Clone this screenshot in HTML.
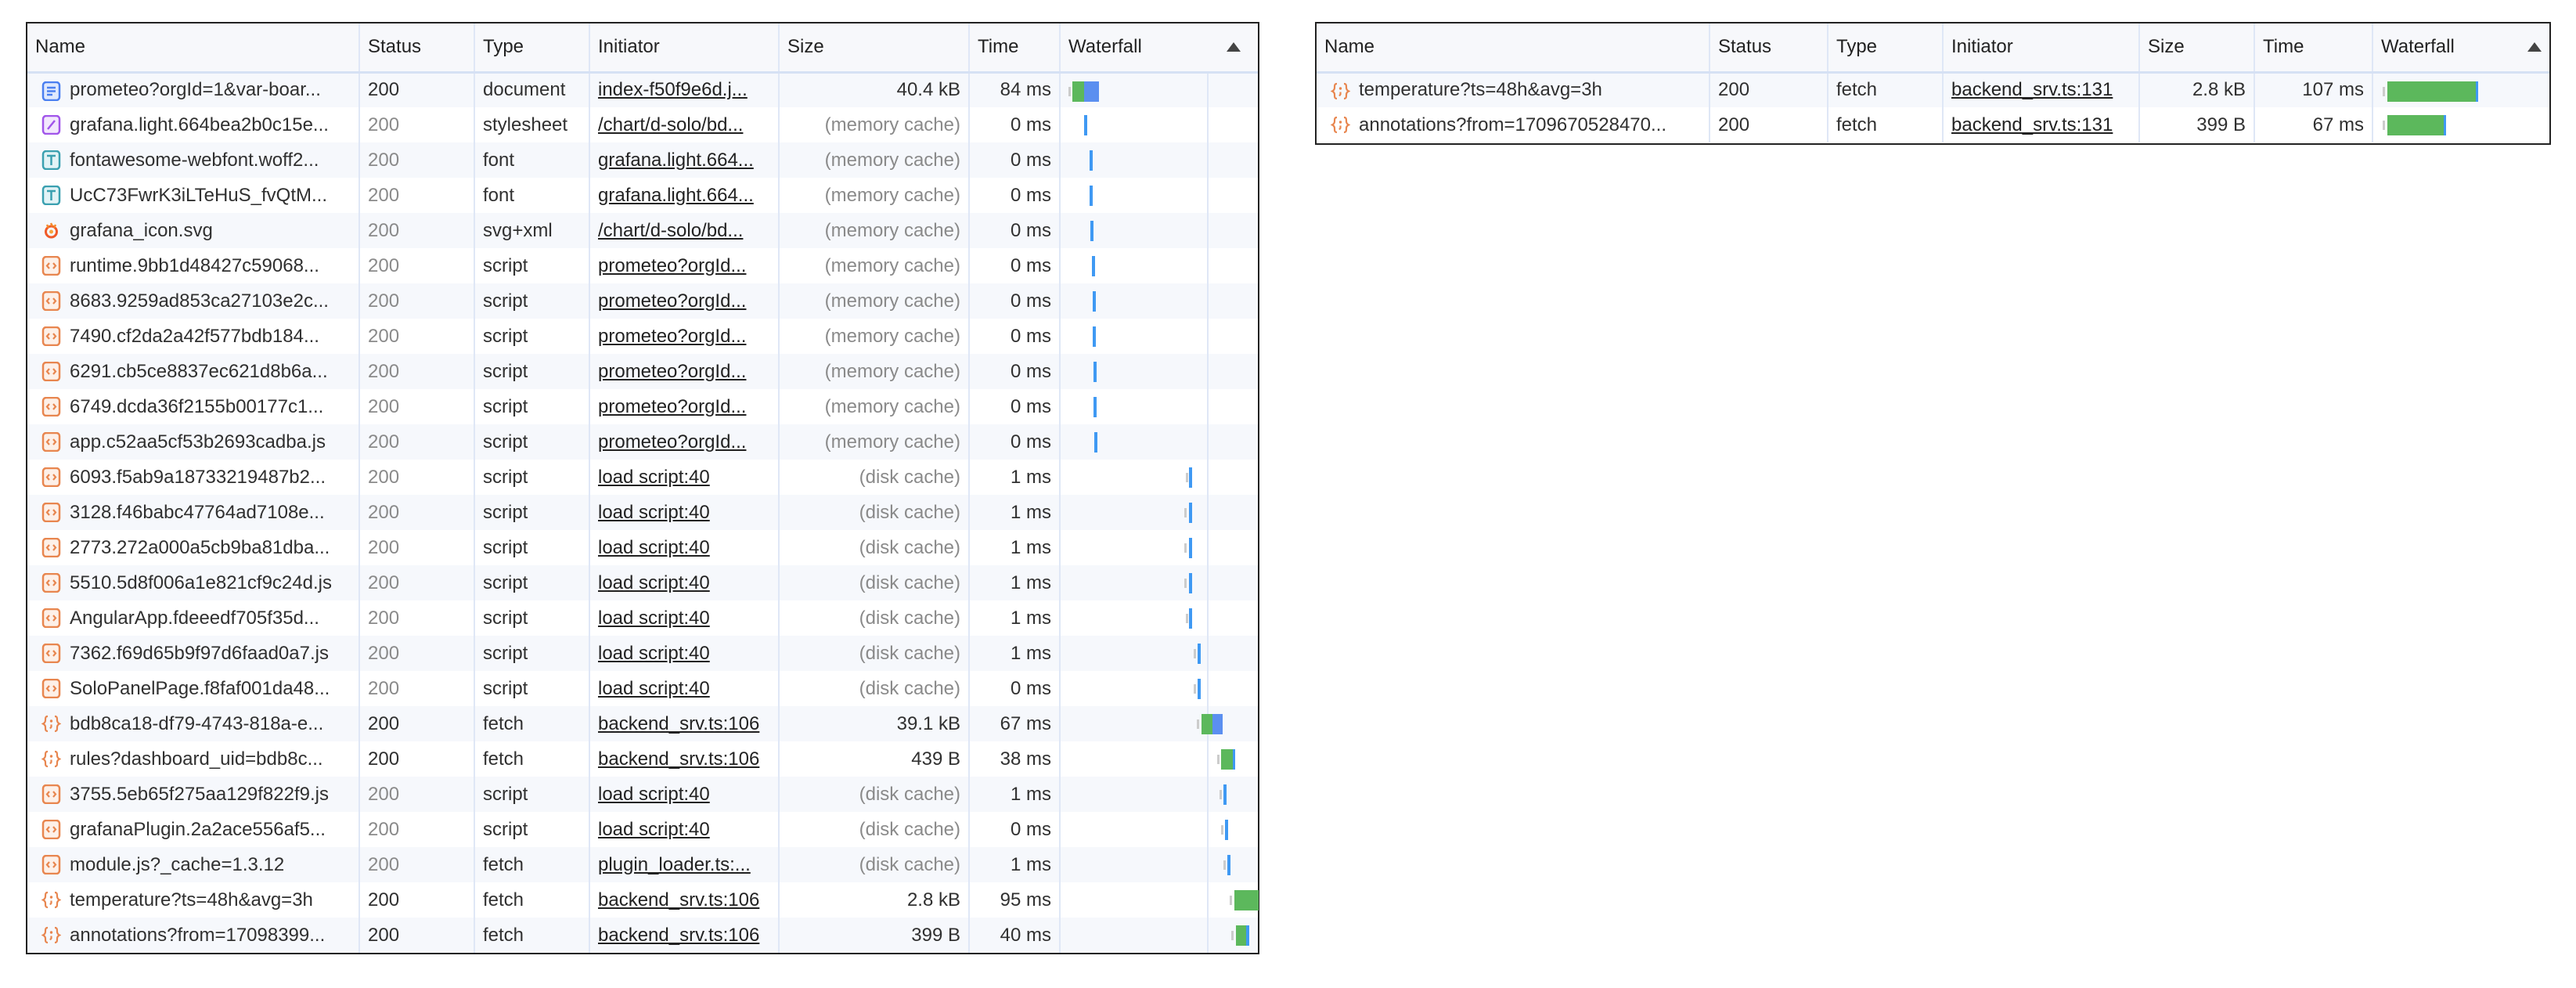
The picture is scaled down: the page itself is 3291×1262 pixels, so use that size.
<!DOCTYPE html>
<html><head><meta charset="utf-8"><style>
*{box-sizing:border-box;margin:0;padding:0}
body{width:3291px;height:1262px;background:#fff;position:relative;overflow:hidden;font-family:"Liberation Sans",Arial,sans-serif;font-size:24px;color:#303030}
.box{position:absolute;border:2px solid #222;background:#fff}
table{border-collapse:collapse;table-layout:fixed}
td,th{height:45px;padding:0 10px;white-space:nowrap;overflow:hidden;text-overflow:ellipsis;border-right:2px solid #dfe7f6;font-weight:normal;text-align:left;position:relative}
td:last-child,th:last-child{border-right:none}
th{height:62px;background:#f7f8fb;border-bottom:3px solid #d6e1f4;color:#222}
tr:nth-child(even) td{background:#f6f8fc}
tr:nth-child(odd) td{background:#fff}
.n{padding-left:54px}
.ic{position:absolute;left:18px;top:10px;width:25px;height:25px}
.g{color:#8a8a8a}
.r{text-align:right}
u{text-decoration:underline;color:#222}
.wf{padding:0;overflow:visible}
.b{position:absolute;top:10px;height:26px}
.gr{background:#ccc;width:3px;height:12px;top:17px}
.grn{background:#5cb85c}
.bl{background:#3f99f3}
.blu{background:#5b8ff0}
.inner{position:absolute;left:187px;top:0;bottom:0;border-left:2px solid #dfe7f6}
.arr{position:absolute;right:22px;top:24px;width:0;height:0;border-left:9px solid transparent;border-right:9px solid transparent;border-bottom:12px solid #444}
</style></head><body>

<svg width="0" height="0" style="position:absolute"><defs>
<g id="doc"><rect x="2" y="1" width="21" height="23" rx="4" fill="#dfe9fd" stroke="#4a7ff0" stroke-width="2.5"/><path d="M7 8h11M7 12.5h11M7 17h7" stroke="#4a7ff0" stroke-width="2.5"/></g>
<g id="css"><rect x="2" y="1" width="21" height="23" rx="4" fill="#f3e8fd" stroke="#a155ea" stroke-width="2.5"/><path d="M8 18l9-11" stroke="#a155ea" stroke-width="2.5"/></g>
<g id="font"><rect x="2" y="1" width="21" height="23" rx="4" fill="#e2f3f6" stroke="#3aa0b0" stroke-width="2.5"/><path d="M7 7h11M12.5 7v12" stroke="#3aa0b0" stroke-width="2.5"/></g>
<g id="graf"><circle cx="12.5" cy="14" r="7" fill="none" stroke="#f05a28" stroke-width="3"/><circle cx="12.5" cy="14" r="2.5" fill="#f8a33a"/><path d="M12 3l2 4M18 5l-2 4M7 5l2 4" stroke="#f58a2a" stroke-width="2.5"/></g>
<g id="js"><rect x="2" y="1" width="21" height="23" rx="4" fill="#fdf0e8" stroke="#e8864f" stroke-width="2.5"/><path d="M10 9l-3 3.5 3 3.5M15 9l3 3.5-3 3.5" fill="none" stroke="#e8864f" stroke-width="2.2"/></g>
<g id="fx"><path d="M8 3c-3 0-3 2-3 5s-2 4-3 4.5c1 .5 3 1.5 3 4.5s0 5 3 5M17 3c3 0 3 2 3 5s2 4 3 4.5c-1 .5-3 1.5-3 4.5s0 5-3 5" fill="none" stroke="#e8864f" stroke-width="2.2"/><circle cx="12.5" cy="9" r="1.7" fill="#e8864f"/><path d="M12.5 13.5v3l-1.5 2" stroke="#e8864f" stroke-width="2.2" fill="none"/></g>
</defs></svg>

<div class="box" style="left:33px;top:28px;width:1576px;height:1191px">
<table style="width:1572px">
<colgroup><col style="width:424px"><col style="width:147px"><col style="width:147px"><col style="width:242px"><col style="width:243px"><col style="width:116px"><col style="width:253px"></colgroup>
<tr><th>Name</th><th>Status</th><th>Type</th><th>Initiator</th><th>Size</th><th>Time</th><th>Waterfall<span class="arr"></span></th></tr>
<tr><td class="n"><svg class="ic"><use href="#doc"/></svg>prometeo?orgId=1&amp;var-boar...</td><td>200</td><td>document</td><td><u>index-f50f9e6d.j...</u></td><td class="r">40.4 kB</td><td class="r">84 ms</td><td class="wf"><div class="inner"></div><div class="b gr" style="left:10px"></div><div class="b grn" style="left:15px;width:15px"></div><div class="b blu" style="left:30px;width:19px"></div></td></tr>
<tr><td class="n"><svg class="ic"><use href="#css"/></svg>grafana.light.664bea2b0c15e...</td><td class="g">200</td><td>stylesheet</td><td><u>/chart/d-solo/bd...</u></td><td class="r g">(memory cache)</td><td class="r">0 ms</td><td class="wf"><div class="inner"></div><div class="b bl" style="left:30px;width:4px"></div></td></tr>
<tr><td class="n"><svg class="ic"><use href="#font"/></svg>fontawesome-webfont.woff2...</td><td class="g">200</td><td>font</td><td><u>grafana.light.664...</u></td><td class="r g">(memory cache)</td><td class="r">0 ms</td><td class="wf"><div class="inner"></div><div class="b bl" style="left:37px;width:4px"></div></td></tr>
<tr><td class="n"><svg class="ic"><use href="#font"/></svg>UcC73FwrK3iLTeHuS_fvQtM...</td><td class="g">200</td><td>font</td><td><u>grafana.light.664...</u></td><td class="r g">(memory cache)</td><td class="r">0 ms</td><td class="wf"><div class="inner"></div><div class="b bl" style="left:37px;width:4px"></div></td></tr>
<tr><td class="n"><svg class="ic"><use href="#graf"/></svg>grafana_icon.svg</td><td class="g">200</td><td>svg+xml</td><td><u>/chart/d-solo/bd...</u></td><td class="r g">(memory cache)</td><td class="r">0 ms</td><td class="wf"><div class="inner"></div><div class="b bl" style="left:38px;width:4px"></div></td></tr>
<tr><td class="n"><svg class="ic"><use href="#js"/></svg>runtime.9bb1d48427c59068...</td><td class="g">200</td><td>script</td><td><u>prometeo?orgId...</u></td><td class="r g">(memory cache)</td><td class="r">0 ms</td><td class="wf"><div class="inner"></div><div class="b bl" style="left:40px;width:4px"></div></td></tr>
<tr><td class="n"><svg class="ic"><use href="#js"/></svg>8683.9259ad853ca27103e2c...</td><td class="g">200</td><td>script</td><td><u>prometeo?orgId...</u></td><td class="r g">(memory cache)</td><td class="r">0 ms</td><td class="wf"><div class="inner"></div><div class="b bl" style="left:41px;width:4px"></div></td></tr>
<tr><td class="n"><svg class="ic"><use href="#js"/></svg>7490.cf2da2a42f577bdb184...</td><td class="g">200</td><td>script</td><td><u>prometeo?orgId...</u></td><td class="r g">(memory cache)</td><td class="r">0 ms</td><td class="wf"><div class="inner"></div><div class="b bl" style="left:41px;width:4px"></div></td></tr>
<tr><td class="n"><svg class="ic"><use href="#js"/></svg>6291.cb5ce8837ec621d8b6a...</td><td class="g">200</td><td>script</td><td><u>prometeo?orgId...</u></td><td class="r g">(memory cache)</td><td class="r">0 ms</td><td class="wf"><div class="inner"></div><div class="b bl" style="left:42px;width:4px"></div></td></tr>
<tr><td class="n"><svg class="ic"><use href="#js"/></svg>6749.dcda36f2155b00177c1...</td><td class="g">200</td><td>script</td><td><u>prometeo?orgId...</u></td><td class="r g">(memory cache)</td><td class="r">0 ms</td><td class="wf"><div class="inner"></div><div class="b bl" style="left:42px;width:4px"></div></td></tr>
<tr><td class="n"><svg class="ic"><use href="#js"/></svg>app.c52aa5cf53b2693cadba.js</td><td class="g">200</td><td>script</td><td><u>prometeo?orgId...</u></td><td class="r g">(memory cache)</td><td class="r">0 ms</td><td class="wf"><div class="inner"></div><div class="b bl" style="left:43px;width:4px"></div></td></tr>
<tr><td class="n"><svg class="ic"><use href="#js"/></svg>6093.f5ab9a18733219487b2...</td><td class="g">200</td><td>script</td><td><u>load script:40</u></td><td class="r g">(disk cache)</td><td class="r">1 ms</td><td class="wf"><div class="inner"></div><div class="b gr" style="left:160px"></div><div class="b bl" style="left:164px;width:4px"></div></td></tr>
<tr><td class="n"><svg class="ic"><use href="#js"/></svg>3128.f46babc47764ad7108e...</td><td class="g">200</td><td>script</td><td><u>load script:40</u></td><td class="r g">(disk cache)</td><td class="r">1 ms</td><td class="wf"><div class="inner"></div><div class="b gr" style="left:158px"></div><div class="b bl" style="left:164px;width:4px"></div></td></tr>
<tr><td class="n"><svg class="ic"><use href="#js"/></svg>2773.272a000a5cb9ba81dba...</td><td class="g">200</td><td>script</td><td><u>load script:40</u></td><td class="r g">(disk cache)</td><td class="r">1 ms</td><td class="wf"><div class="inner"></div><div class="b gr" style="left:158px"></div><div class="b bl" style="left:164px;width:4px"></div></td></tr>
<tr><td class="n"><svg class="ic"><use href="#js"/></svg>5510.5d8f006a1e821cf9c24d.js</td><td class="g">200</td><td>script</td><td><u>load script:40</u></td><td class="r g">(disk cache)</td><td class="r">1 ms</td><td class="wf"><div class="inner"></div><div class="b gr" style="left:158px"></div><div class="b bl" style="left:164px;width:4px"></div></td></tr>
<tr><td class="n"><svg class="ic"><use href="#js"/></svg>AngularApp.fdeeedf705f35d...</td><td class="g">200</td><td>script</td><td><u>load script:40</u></td><td class="r g">(disk cache)</td><td class="r">1 ms</td><td class="wf"><div class="inner"></div><div class="b gr" style="left:160px"></div><div class="b bl" style="left:164px;width:4px"></div></td></tr>
<tr><td class="n"><svg class="ic"><use href="#js"/></svg>7362.f69d65b9f97d6faad0a7.js</td><td class="g">200</td><td>script</td><td><u>load script:40</u></td><td class="r g">(disk cache)</td><td class="r">1 ms</td><td class="wf"><div class="inner"></div><div class="b gr" style="left:170px"></div><div class="b bl" style="left:175px;width:4px"></div></td></tr>
<tr><td class="n"><svg class="ic"><use href="#js"/></svg>SoloPanelPage.f8faf001da48...</td><td class="g">200</td><td>script</td><td><u>load script:40</u></td><td class="r g">(disk cache)</td><td class="r">0 ms</td><td class="wf"><div class="inner"></div><div class="b gr" style="left:170px"></div><div class="b bl" style="left:175px;width:4px"></div></td></tr>
<tr><td class="n"><svg class="ic"><use href="#fx"/></svg>bdb8ca18-df79-4743-818a-e...</td><td>200</td><td>fetch</td><td><u>backend_srv.ts:106</u></td><td class="r">39.1 kB</td><td class="r">67 ms</td><td class="wf"><div class="inner"></div><div class="b gr" style="left:174px"></div><div class="b grn" style="left:180px;width:14px"></div><div class="b blu" style="left:194px;width:13px"></div></td></tr>
<tr><td class="n"><svg class="ic"><use href="#fx"/></svg>rules?dashboard_uid=bdb8c...</td><td>200</td><td>fetch</td><td><u>backend_srv.ts:106</u></td><td class="r">439 B</td><td class="r">38 ms</td><td class="wf"><div class="inner"></div><div class="b gr" style="left:200px"></div><div class="b grn" style="left:205px;width:15px"></div><div class="b bl" style="left:220px;width:3px"></div></td></tr>
<tr><td class="n"><svg class="ic"><use href="#js"/></svg>3755.5eb65f275aa129f822f9.js</td><td class="g">200</td><td>script</td><td><u>load script:40</u></td><td class="r g">(disk cache)</td><td class="r">1 ms</td><td class="wf"><div class="inner"></div><div class="b gr" style="left:203px"></div><div class="b bl" style="left:208px;width:4px"></div></td></tr>
<tr><td class="n"><svg class="ic"><use href="#js"/></svg>grafanaPlugin.2a2ace556af5...</td><td class="g">200</td><td>script</td><td><u>load script:40</u></td><td class="r g">(disk cache)</td><td class="r">0 ms</td><td class="wf"><div class="inner"></div><div class="b gr" style="left:205px"></div><div class="b bl" style="left:210px;width:4px"></div></td></tr>
<tr><td class="n"><svg class="ic"><use href="#js"/></svg>module.js?_cache=1.3.12</td><td class="g">200</td><td>fetch</td><td><u>plugin_loader.ts:...</u></td><td class="r g">(disk cache)</td><td class="r">1 ms</td><td class="wf"><div class="inner"></div><div class="b gr" style="left:208px"></div><div class="b bl" style="left:213px;width:4px"></div></td></tr>
<tr><td class="n"><svg class="ic"><use href="#fx"/></svg>temperature?ts=48h&amp;avg=3h</td><td>200</td><td>fetch</td><td><u>backend_srv.ts:106</u></td><td class="r">2.8 kB</td><td class="r">95 ms</td><td class="wf"><div class="inner"></div><div class="b gr" style="left:216px"></div><div class="b grn" style="left:222px;width:31px"></div></td></tr>
<tr><td class="n"><svg class="ic"><use href="#fx"/></svg>annotations?from=17098399...</td><td>200</td><td>fetch</td><td><u>backend_srv.ts:106</u></td><td class="r">399 B</td><td class="r">40 ms</td><td class="wf"><div class="inner"></div><div class="b gr" style="left:218px"></div><div class="b grn" style="left:224px;width:13px"></div><div class="b bl" style="left:237px;width:4px"></div></td></tr>
</table></div>

<div class="box" style="left:1680px;top:28px;width:1579px;height:157px">
<table style="width:1575px">
<colgroup><col style="width:502px"><col style="width:151px"><col style="width:147px"><col style="width:251px"><col style="width:147px"><col style="width:151px"><col style="width:226px"></colgroup>
<tr><th>Name</th><th>Status</th><th>Type</th><th>Initiator</th><th>Size</th><th>Time</th><th>Waterfall<span class="arr" style="right:10px"></span></th></tr>
<tr><td class="n"><svg class="ic"><use href="#fx"/></svg>temperature?ts=48h&amp;avg=3h</td><td>200</td><td>fetch</td><td><u>backend_srv.ts:131</u></td><td class="r">2.8 kB</td><td class="r">107 ms</td><td class="wf"><div class="b gr" style="left:12px"></div><div class="b grn" style="left:18px;width:113px"></div><div class="b bl" style="left:131px;width:3px"></div></td></tr>
<tr><td class="n"><svg class="ic"><use href="#fx"/></svg>annotations?from=1709670528470...</td><td>200</td><td>fetch</td><td><u>backend_srv.ts:131</u></td><td class="r">399 B</td><td class="r">67 ms</td><td class="wf"><div class="b gr" style="left:12px"></div><div class="b grn" style="left:18px;width:72px"></div><div class="b bl" style="left:90px;width:3px"></div></td></tr>
</table></div>
</body></html>
